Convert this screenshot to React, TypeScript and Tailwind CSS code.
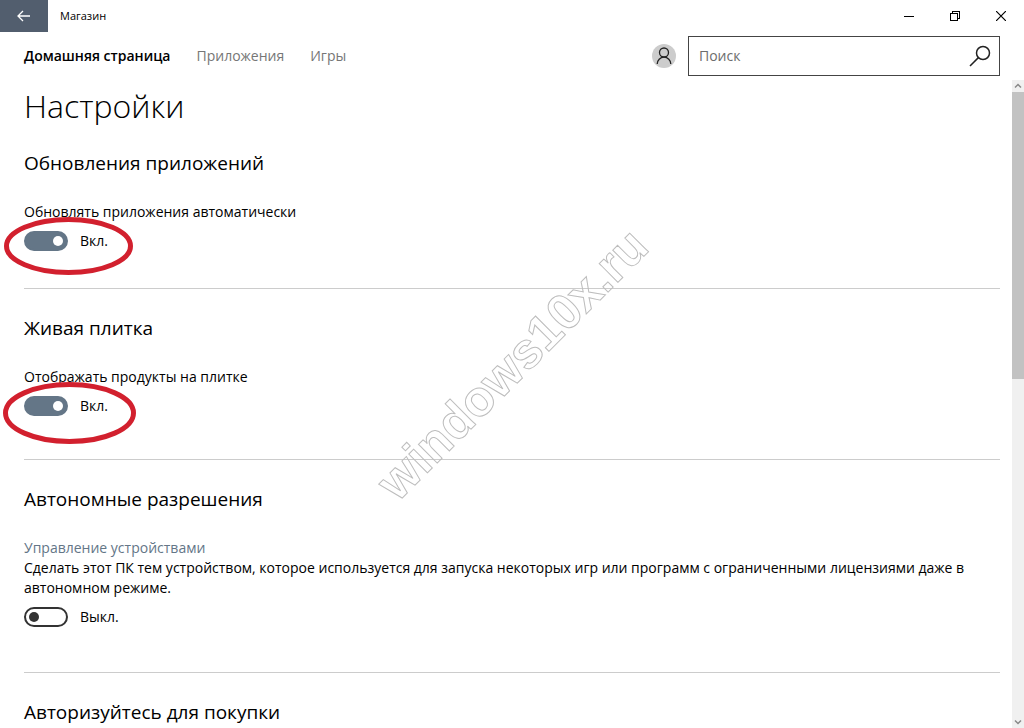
import React, { useState } from 'react';
import { clsx } from 'clsx';

interface ToggleProps {
  id: string;
  label: string;
  defaultOn?: boolean;
  children?: React.ReactNode;
}

const Toggle: React.FC<ToggleProps> = ({ id, label, defaultOn = false, children }) => {
  const [on, setOn] = useState(defaultOn);

  return (
    <>
      <label htmlFor={id} className="block">{label}</label>
      <div className="relative mt-2 flex h-[22px] items-center gap-3">
        <input
          id={id}
          type="checkbox"
          role="switch"
          checked={on}
          onChange={(e) => setOn(e.target.checked)}
          className="flex h-5 w-11 shrink-0 appearance-none items-center rounded-full border-2 border-[#333] px-[3px] before:size-[10px] before:rounded-full before:bg-[#333] checked:justify-end checked:border-[#647687] checked:bg-[#647687] checked:before:bg-white"
        />
        <span>{on ? 'Вкл.' : 'Выкл.'}</span>
        {children}
      </div>
    </>
  );
};

interface SectionProps {
  title: string;
  className?: string;
  children?: React.ReactNode;
}

const Section: React.FC<SectionProps> = ({ title, className, children }) => (
  <section className={clsx('border-b border-[#ccc] pt-6', className)}>
    <h2 className="mb-6 text-[19px] leading-[30px]">{title}</h2>
    {children}
  </section>
);

const tabs = [
  { label: 'Домашняя страница', active: true },
  { label: 'Приложения', active: false },
  { label: 'Игры', active: false },
];

const App: React.FC = () => {
  return (
    <div className="flex h-screen flex-col overflow-hidden bg-white font-['Open_Sans','Noto_Sans',sans-serif] text-sm leading-5 text-black">
      <header className="shrink-0">
        <div className="flex h-8 items-center">
          <button aria-label="Назад" className="flex h-8 w-12 items-center justify-center bg-[#525e6e] text-white">
            <svg width="14" height="12" viewBox="0 0 14 12" fill="none" stroke="currentColor" strokeWidth="1.3">
              <path d="M13 6H1M6 1L1 6l5 5" />
            </svg>
          </button>
          <span className="ml-3 flex-1 text-[11px]">Магазин</span>
          <button aria-label="Свернуть" className="flex h-8 w-[46px] items-center justify-center">
            <svg width="10" height="10" stroke="currentColor" shapeRendering="crispEdges">
              <path d="M0 5.5h10" />
            </svg>
          </button>
          <button aria-label="Свернуть в окно" className="flex h-8 w-[46px] items-center justify-center">
            <svg width="10" height="10" fill="none" stroke="currentColor" shapeRendering="crispEdges">
              <path d="M.5 2.5h7v7h-7zM2.5 2.5v-2h7v7h-2" />
            </svg>
          </button>
          <button aria-label="Закрыть" className="flex h-8 w-[46px] items-center justify-center">
            <svg width="10" height="10" stroke="currentColor" strokeWidth="1.2">
              <path d="M0 0l10 10M10 0L0 10" />
            </svg>
          </button>
        </div>

        <div className="flex h-12 items-center px-6">
          <nav className="flex flex-1 gap-[26px]">
            {tabs.map((tab) => (
              <a key={tab.label} href="#" className={tab.active ? 'font-semibold text-black' : 'text-[#767676]'}>
                {tab.label}
              </a>
            ))}
          </nav>
          <button aria-label="Учётная запись" className="mr-3 flex size-6 items-center justify-center rounded-full bg-[#ccc]">
            <svg width="16" height="18" viewBox="0 0 16 18" fill="none" stroke="#222" strokeWidth="1.3">
              <circle cx="8" cy="5.5" r="4.5" />
              <path d="M1.2 17a6.8 6.8 0 0 1 13.6 0" />
            </svg>
          </button>
          <div className="flex h-10 w-[312px] items-center border border-[#444] pr-2 pl-[10px]">
            <input
              type="text"
              aria-label="Поиск"
              placeholder="Поиск"
              className="min-w-0 flex-1 outline-none placeholder:text-[#6d6d6d]"
            />
            <button aria-label="Найти">
              <svg width="22" height="22" viewBox="0 0 22 22" fill="none" stroke="#222" strokeWidth="1.5">
                <circle cx="14" cy="8" r="6.5" />
                <path d="M9.4 12.6L1 21" />
              </svg>
            </button>
          </div>
        </div>
      </header>

      <div className="flex min-h-0 flex-1">
        <main className="min-w-0 flex-1 overflow-hidden pr-3 pl-6">
          <h1 className="pt-2 text-[32px] leading-9 font-light">Настройки</h1>

          <Section title="Обновления приложений" className="pb-9">
            <Toggle id="auto-update" label="Обновлять приложения автоматически" defaultOn>
              <svg className="pointer-events-none absolute -top-[13px] -left-5" width="129" height="58" fill="none">
                <ellipse cx="64.5" cy="29" rx="62" ry="26.5" stroke="#d2202e" strokeWidth="5" />
              </svg>
            </Toggle>
          </Section>

          <Section title="Живая плитка" className="pb-[42px]">
            <Toggle id="live-tile" label="Отображать продукты на плитке" defaultOn>
              <svg className="pointer-events-none absolute -top-[13px] -left-[21px]" width="133" height="62" fill="none">
                <ellipse cx="66.5" cy="31" rx="64" ry="28.5" stroke="#d2202e" strokeWidth="5" />
              </svg>
            </Toggle>
          </Section>

          <Section title="Автономные разрешения" className="pb-11">
            <a href="#" className="block text-[#647687]">Управление устройствами</a>
            <Toggle
              id="offline"
              label="Сделать этот ПК тем устройством, которое используется для запуска некоторых игр или программ с ограниченными лицензиями даже в автономном режиме."
            />
          </Section>

          <Section title="Авторизуйтесь для покупки" />
        </main>

        <div className="flex w-3 shrink-0 flex-col bg-[#f0f0f0] text-[#888]">
          <svg className="h-3 w-3 shrink-0" viewBox="0 0 12 12" fill="none" stroke="currentColor" strokeWidth="1.5">
            <path d="M3 7.5l3-3 3 3" />
          </svg>
          <div className="min-h-0 flex-1">
            <div className="h-[46%] bg-[#c2c2c2]" />
          </div>
          <svg className="h-3 w-3 shrink-0" viewBox="0 0 12 12" fill="none" stroke="currentColor" strokeWidth="1.5">
            <path d="M3 4.5l3 3 3-3" />
          </svg>
        </div>
      </div>

      <div className="pointer-events-none fixed inset-0 flex items-center justify-center">
        <span className="-rotate-45 font-['Liberation_Sans',sans-serif] text-[50px] leading-none font-bold text-transparent [-webkit-text-stroke:1px_#bdbdbd]">
          windows10x.ru
        </span>
      </div>
    </div>
  );
};

export default App;
